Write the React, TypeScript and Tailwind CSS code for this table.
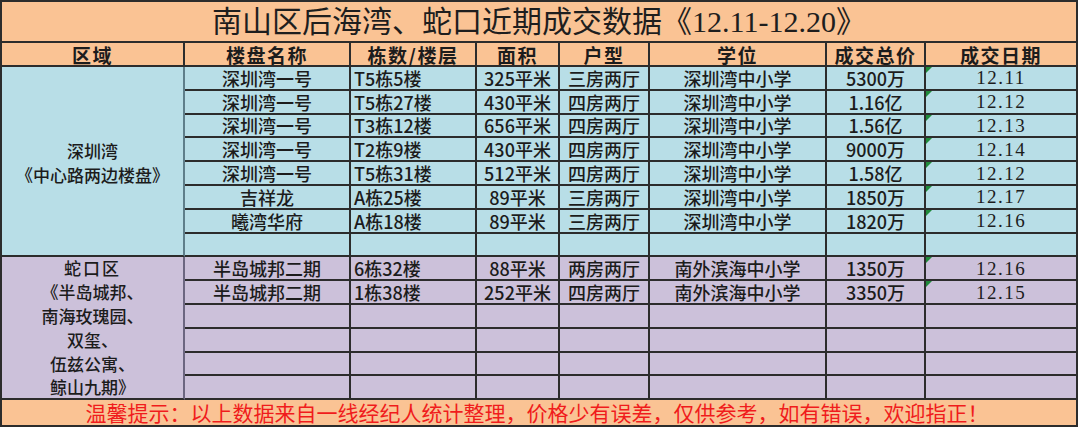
import React from "react";

type Row = string[];

const blueRows: Row[] = [
  ["深圳湾一号", "T5栋5楼", "325平米", "三房两厅", "深圳湾中小学", "5300万", "12.11"],
  ["深圳湾一号", "T5栋27楼", "430平米", "四房两厅", "深圳湾中小学", "1.16亿", "12.12"],
  ["深圳湾一号", "T3栋12楼", "656平米", "四房两厅", "深圳湾中小学", "1.56亿", "12.13"],
  ["深圳湾一号", "T2栋9楼", "430平米", "四房两厅", "深圳湾中小学", "9000万", "12.14"],
  ["深圳湾一号", "T5栋31楼", "512平米", "四房两厅", "深圳湾中小学", "1.58亿", "12.12"],
  ["吉祥龙", "A栋25楼", "89平米", "三房两厅", "深圳湾中小学", "1850万", "12.17"],
  ["曦湾华府", "A栋18楼", "89平米", "三房两厅", "深圳湾中小学", "1820万", "12.16"],
  ["", "", "", "", "", "", ""],
];

const purpleRows: Row[] = [
  ["半岛城邦二期", "6栋32楼", "88平米", "两房两厅", "南外滨海中小学", "1350万", "12.16"],
  ["半岛城邦二期", "1栋38楼", "252平米", "四房两厅", "南外滨海中小学", "3350万", "12.15"],
  ["", "", "", "", "", "", ""],
  ["", "", "", "", "", "", ""],
  ["", "", "", "", "", "", ""],
  ["", "", "", "", "", "", ""],
];

const headers = ["区域", "楼盘名称", "栋数/楼层", "面积", "户型", "学位", "成交总价", "成交日期"];

const cell = "border-r-2 border-b-2 border-[#2c2c2c] flex items-center leading-none whitespace-nowrap";

function DataRow({ row, bg }: { row: Row; bg: string }) {
  const [name, floor, area, type, school, price, date] = row;
  return (
    <>
      <div className={`${cell} ${bg} justify-center`}>{name}</div>
      <div className={`${cell} ${bg} justify-start pl-[3px]`}>{floor}</div>
      <div className={`${cell} ${bg} justify-center`}>{area}</div>
      <div className={`${cell} ${bg} justify-center`}>{type}</div>
      <div className={`${cell} ${bg} justify-center`}>{school}</div>
      <div className={`${cell} ${bg} justify-center`}>{price}</div>
      <div
        className={`${cell} ${bg} relative justify-center font-['Liberation_Serif','Noto_Sans_CJK_SC',serif] text-[19px] font-normal tracking-[1.5px]`}
      >
        {date && (
          <span className="absolute left-0 top-0 h-0 w-0 border-t-[6px] border-r-[6px] border-t-[#1f8a3a] border-r-transparent" />
        )}
        {date}
      </div>
    </>
  );
}

export default function App() {
  return (
    <div className="h-[430px] w-[1080px] overflow-hidden bg-white font-['Noto_Sans_CJK_SC',sans-serif] text-[#1c1c1c]">
      <div className="grid w-[1078px] grid-cols-[183px_166px_126px_83px_90px_177px_99px_152px] grid-rows-[41px_24px_repeat(14,23.8px)_27px] border-l-2 border-t-2 border-[#2c2c2c] text-[18px] font-medium">
        {/* TITLE */}
        <div className="col-span-8 flex items-center justify-center border-r-2 border-b-2 border-[#2c2c2c] bg-[#fac394] font-['Liberation_Serif','Noto_Sans_CJK_SC',serif] text-[30px] font-normal leading-none text-[#1e1e1e]">
          南山区后海湾、蛇口近期成交数据《12.11-12.20》
        </div>

        {/* HEADER */}
        {headers.map((h) => (
          <div key={h} className={`${cell} justify-center bg-[#fac394] text-[19px] font-bold tracking-[1.5px]`}>
            {h}
          </div>
        ))}

        {/* SHENZHEN BAY */}
        <div className="row-span-8 flex flex-col items-center justify-center gap-[1px] border-r-2 border-b-2 border-r-[#5e7e8a] border-b-[#2c2c2c] bg-[#b8dee7] pt-[2px] text-[17px] leading-[23px]">
          <span>深圳湾</span>
          <span>《中心路两边楼盘》</span>
        </div>
        {blueRows.map((r, i) => (
          <DataRow key={"b" + i} row={r} bg="bg-[#b8dee7]" />
        ))}

        {/* SHEKOU */}
        <div className="row-span-6 flex flex-col items-center justify-center border-r-2 border-b-2 border-r-[#6c6680] border-b-[#2c2c2c] bg-[#ccc1da] text-[17px] leading-[23.8px]">
          <span className="tracking-[2px]">蛇口区</span>
          <span>《半岛城邦、</span>
          <span>南海玫瑰园、</span>
          <span>双玺、</span>
          <span>伍兹公寓、</span>
          <span>鲸山九期》</span>
        </div>
        {purpleRows.map((r, i) => (
          <DataRow key={"p" + i} row={r} bg="bg-[#ccc1da]" />
        ))}

        {/* FOOTER */}
        <div className="col-span-8 flex items-center justify-center border-r-2 border-b-2 border-[#2c2c2c] bg-[#fac394] pr-[4px] text-[21px] font-normal leading-none text-[#f01c1c]">
          温馨提示：以上数据来自一线经纪人统计整理，价格少有误差，仅供参考，如有错误，欢迎指正！
        </div>
      </div>
    </div>
  );
}
